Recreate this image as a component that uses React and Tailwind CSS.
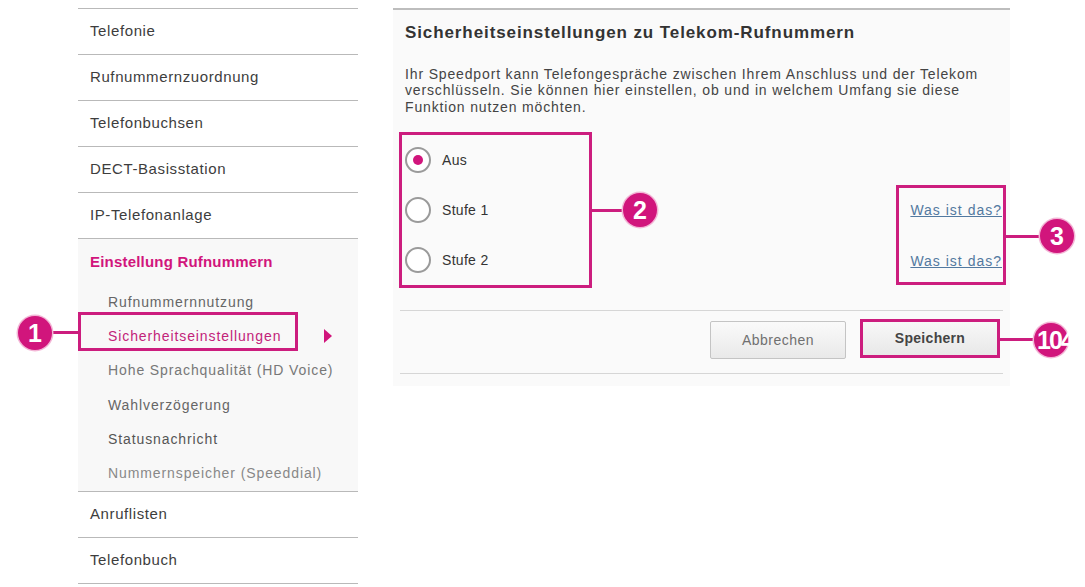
import { useState } from "react";

const mainTop = ["Telefonie", "Rufnummernzuordnung", "Telefonbuchsen", "DECT-Basisstation", "IP-Telefonanlage"];
const subItems = [
  { label: "Rufnummernnutzung", tone: "text-[#666]" },
  { label: "Sicherheitseinstellungen", active: true },
  { label: "Hohe Sprachqualität (HD Voice)", tone: "text-[#777]" },
  { label: "Wahlverzögerung", tone: "text-[#666]" },
  { label: "Statusnachricht", tone: "text-[#555]" },
  { label: "Nummernspeicher (Speeddial)", tone: "text-[#888]" },
];
const mainBottom = ["Anruflisten", "Telefonbuch"];
const levels = ["Aus", "Stufe 1", "Stufe 2"];

function Badge({ n, className }) {
  return (
    <div
      className={`absolute flex h-[34px] w-[34px] items-center justify-center rounded-full bg-[#d1157c] text-[25px] font-bold leading-none text-white shadow-[0_0_0_1.5px_#f3b6d6] ${className}`}
    >
      {n}
    </div>
  );
}

function NavItem({ label }) {
  return (
    <div className="flex h-[46px] items-center border-b border-[#b9b9b9] pl-3 text-[15px] tracking-[0.6px] text-[#3d3d3d]">
      {label}
    </div>
  );
}

function Radio({ checked, label, onPick }) {
  return (
    <button type="button" onClick={onPick} className="flex h-[50px] items-center gap-[11px] pl-[3px] text-left">
      <span className="flex h-[26px] w-[26px] items-center justify-center rounded-full border-2 border-[#9a9a9a] bg-white">
        {checked && <span className="h-[10px] w-[10px] rounded-full bg-[#d1157c]" />}
      </span>
      <span className="text-[14px] tracking-[0.3px] text-[#333]">{label}</span>
    </button>
  );
}

export default function App() {
  const [level, setLevel] = useState("Aus");

  return (
    <div className="relative h-[587px] w-[1085px] overflow-hidden bg-white font-['Liberation_Sans',Arial,sans-serif]">
      <div className="flex pl-[78px] pt-2">
        {/* left navigation */}
        <nav className="w-[280px] border-t border-[#b9b9b9]">
          {mainTop.map((l) => (
            <NavItem key={l} label={l} />
          ))}
          <div className="border-b border-[#b9b9b9] bg-[#f8f8f8]">
            <div className="flex h-[46px] items-center pl-3 text-[15px] font-bold tracking-[0.2px] text-[#d1157c]">
              Einstellung Rufnummern
            </div>
            {subItems.map((s) => (
              <div
                key={s.label}
                className={`relative flex h-[34.3px] items-center pl-[30px] text-[14px] tracking-[0.9px] ${
                  s.active ? "text-[#c2237a]" : s.tone
                }`}
              >
                {s.label}
                {s.active && (
                  <span className="absolute left-[246px] top-1/2 h-0 w-0 -translate-y-1/2 border-y-[7px] border-l-[8px] border-y-transparent border-l-[#d1157c]" />
                )}
              </div>
            ))}
          </div>
          {mainBottom.map((l) => (
            <NavItem key={l} label={l} />
          ))}
        </nav>

        {/* settings panel */}
        <section className="ml-[35px] w-[617px]">
          <div className="border-t-2 border-[#bdbdbd] bg-[#fafafa] pb-[12px]">
            <h1 className="pl-3 pt-[10px] text-[17px] font-bold tracking-[0.9px] text-[#333]">
              Sicherheitseinstellungen zu Telekom-Rufnummern
            </h1>
            <p className="mt-[20px] pl-3 text-[14px] leading-[16.5px] tracking-[0.85px] text-[#444]">
              Ihr Speedport kann Telefongespräche zwischen Ihrem Anschluss und der Telekom
              <br />
              verschlüsseln. Sie können hier einstellen, ob und in welchem Umfang sie diese
              <br />
              Funktion nutzen möchten.
            </p>

            <div className="mt-[17px] flex items-end justify-between pl-[6px] pr-[4px]">
              <div className="flex w-[193px] flex-col border-[3px] border-[#cc1d7e]">
                {levels.map((l) => (
                  <Radio key={l} label={l} checked={level === l} onPick={() => setLevel(l)} />
                ))}
              </div>
              <div className="mb-[3px] flex h-[100px] w-[110px] flex-col items-end justify-center gap-[30px] border-[3px] border-[#cc1d7e] pr-[1px] pt-[2px]">
                <a href="#" className="text-[14px] tracking-[1px] text-[#5279a0] underline">
                  Was ist das?
                </a>
                <a href="#" className="text-[14px] tracking-[1px] text-[#5279a0] underline">
                  Was ist das?
                </a>
              </div>
            </div>

            <div className="mx-[7px] mt-[22px] border-t border-[#d6d6d6]" />

            <div className="flex items-center justify-end gap-[14px] pr-[10px] pt-[7px]">
              <button className="mt-[3px] h-[38px] w-[136px] rounded-[2px] border border-[#c4c4c4] bg-gradient-to-b from-[#fafafa] to-[#e9e9e9] text-[14px] tracking-[0.5px] text-[#707070]">
                Abbrechen
              </button>
              <div className="border-[3px] border-[#cc1d7e]">
                <button className="h-[33px] w-[134px] bg-gradient-to-b from-[#f8f8f8] to-[#e8e8e8] text-[14px] font-bold tracking-[0.3px] text-[#444]">
                  Speichern
                </button>
              </div>
            </div>
            <div className="mx-[7px] mt-[14px] border-t border-[#d6d6d6]" />
          </div>
        </section>
      </div>

      {/* annotation markers */}
      <div className="absolute left-[78px] top-[312px] h-[39px] w-[220px] border-[3px] border-[#cc1d7e]" />
      <div className="absolute left-[48px] top-[331px] h-[3px] w-[30px] bg-[#cc1d7e]" />
      <Badge n="1" className="left-[18px] top-[316px]" />

      <div className="absolute left-[592px] top-[209px] h-[3px] w-[34px] bg-[#cc1d7e]" />
      <Badge n="2" className="left-[623px] top-[193px]" />

      <div className="absolute left-[1006px] top-[235px] h-[3px] w-[34px] bg-[#cc1d7e]" />
      <Badge n="3" className="left-[1040px] top-[219px]" />

      <div className="absolute left-[1000px] top-[338px] h-[3px] w-[36px] bg-[#cc1d7e]" />
      <div className="absolute left-[1034px] top-[323px] flex h-[34px] w-[34px] items-center rounded-full bg-[#d1157c] shadow-[0_0_0_1.5px_#f3b6d6]">
        <span className="ml-[3px] whitespace-nowrap text-[25px] font-bold leading-none tracking-[-2px] text-white">104</span>
      </div>
    </div>
  );
}
